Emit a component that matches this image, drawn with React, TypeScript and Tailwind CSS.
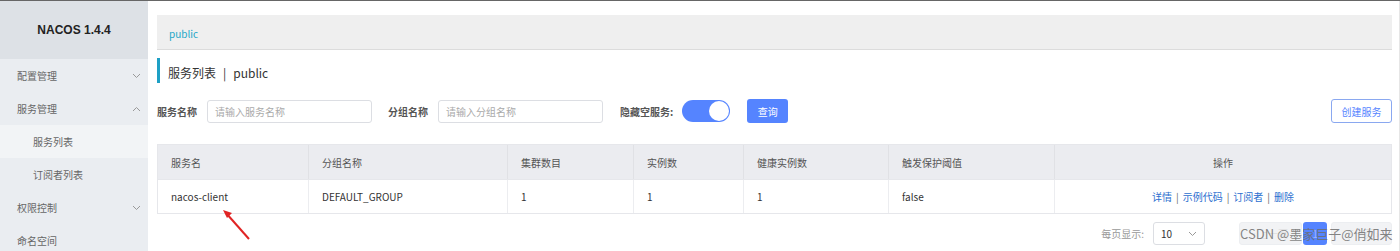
import React from "react";

const font = { fontFamily: '"Noto Sans CJK SC", "Liberation Sans", sans-serif' };
const arial = { fontFamily: '"Liberation Sans", Arial, sans-serif' };

function Chevron({ up = false }: { up?: boolean }) {
  return (
    <svg width="9" height="6" viewBox="0 0 9 6" className="text-[#999]">
      {up ? (
        <path d="M1 5 L4.5 1.5 L8 5" fill="none" stroke="currentColor" strokeWidth="1" />
      ) : (
        <path d="M1 1 L4.5 4.5 L8 1" fill="none" stroke="currentColor" strokeWidth="1" />
      )}
    </svg>
  );
}

const cols = [
  { w: "w-[151px]", h: "服务名", v: "nacos-client" },
  { w: "w-[199px]", h: "分组名称", v: "DEFAULT_GROUP" },
  { w: "w-[126px]", h: "集群数目", v: "1" },
  { w: "w-[110px]", h: "实例数", v: "1" },
  { w: "w-[145px]", h: "健康实例数", v: "1" },
  { w: "w-[166px]", h: "触发保护阈值", v: "false" },
];

export default function App() {
  return (
    <div style={font} className="w-[1400px] h-[251px] overflow-hidden bg-white border-t border-[#666] flex text-[10px] relative">
      {/* Sidebar */}
      <aside className="w-[148px] shrink-0 bg-[#eaedf1] flex flex-col">
        <div style={arial} className="h-[58px] shrink-0 bg-[#dde1e6] flex items-center justify-center text-[12px] font-bold text-[#222]">
          NACOS 1.4.4
        </div>
        <div className="h-[33px] shrink-0 flex items-center justify-between pl-[17px] pr-[7px] text-[#666]">
          <span>配置管理</span>
          <Chevron />
        </div>
        <div className="h-[33px] shrink-0 flex items-center justify-between pl-[17px] pr-[7px] text-[#666]">
          <span>服务管理</span>
          <Chevron up />
        </div>
        <div className="h-[33px] shrink-0 flex items-center pl-[33px] text-[#666] bg-[#f2f4f6]">服务列表</div>
        <div className="h-[33px] shrink-0 flex items-center pl-[33px] text-[#666]">订阅者列表</div>
        <div className="h-[33px] shrink-0 flex items-center justify-between pl-[17px] pr-[7px] text-[#666]">
          <span>权限控制</span>
          <Chevron />
        </div>
        <div className="h-[33px] shrink-0 flex items-center pl-[17px] text-[#666]">命名空间</div>
      </aside>

      {/* Main */}
      <main className="flex-1 pl-[9px] pr-[7px] pt-[14px] border-r border-[#e6e6e6] flex flex-col">
        <div className="h-[35px] shrink-0 bg-[#efefef] border-b border-[#dcdcdc] flex items-center pl-[12px] pt-[2px] text-[#1ea7c8]">
          public
        </div>

        <div className="mt-[8px] h-[25px] shrink-0 border-l-[3px] border-[#1ea0c5] flex items-center pl-[8px] pt-[4px] text-[12px] text-[#333]">
          服务列表<span className="mx-[7px]">|</span>public
        </div>

        <div className="mt-[16px] h-[24px] shrink-0 flex items-center">
          <span className="font-bold text-[#555] w-[50px]">服务名称</span>
          <div className="w-[165px] h-[23px] border border-[#dcdee3] rounded-[3px] flex items-center pl-[7px] text-[#aaa]">
            请输入服务名称
          </div>
          <span className="font-bold text-[#555] ml-[16px] w-[50px]">分组名称</span>
          <div className="w-[165px] h-[23px] border border-[#dcdee3] rounded-[3px] flex items-center pl-[7px] text-[#aaa]">
            请输入分组名称
          </div>
          <span className="font-bold text-[#555] ml-[17px]">隐藏空服务:</span>
          <div className="ml-[9px] w-[48px] h-[22px] rounded-full bg-[#5584ff] flex items-center justify-end pr-[1px]">
            <div className="w-[20px] h-[20px] rounded-full bg-white" />
          </div>
          <div className="ml-[17px] w-[41px] h-[24px] rounded-[3px] bg-[#5584ff] text-white flex items-center justify-center">
            查询
          </div>
          <div className="flex-1" />
          <div className="w-[61px] h-[24px] rounded-[3px] border border-[#8aa8f0] text-[#5584ff] flex items-center justify-center">
            创建服务
          </div>
        </div>

        {/* Table */}
        <div className="mt-[21px] shrink-0 border border-[#e6e7eb]">
          <div className="flex h-[34px] bg-[#ebecf0] text-[#555]">
            {cols.map((c) => (
              <div key={c.h} className={`${c.w} shrink-0 border-r border-[#e0e1e5] flex items-center pl-[13px]`}>
                {c.h}
              </div>
            ))}
            <div className="flex-1 flex items-center justify-center">操作</div>
          </div>
          <div className="flex h-[34px] bg-white text-[#333] border-t border-[#e6e7eb]">
            {cols.map((c) => (
              <div key={c.h} className={`${c.w} shrink-0 border-r border-[#ecedf0] flex items-center pl-[13px]`}>
                {c.v}
              </div>
            ))}
            <div className="flex-1 flex items-center justify-center text-[#2c6fcf]">
              <span>详情</span>
              <span className="mx-[4px] text-[#666]">|</span>
              <span>示例代码</span>
              <span className="mx-[4px] text-[#666]">|</span>
              <span>订阅者</span>
              <span className="mx-[4px] text-[#666]">|</span>
              <span>删除</span>
            </div>
          </div>
        </div>

        {/* Pagination */}
        <div className="mt-[8px] h-[23px] shrink-0 flex items-center justify-end">
          <span className="text-[#999]">每页显示:</span>
          <div className="ml-[9px] w-[52px] h-[23px] border border-[#dcdee3] rounded-[3px] flex items-center justify-between pl-[7px] pr-[7px] text-[#333]">
            <span>10</span>
            <Chevron />
          </div>
          <div className="ml-[34px] w-[63px] h-[23px] rounded-[3px] bg-[#f2f3f5] border border-[#eceef1] flex items-center justify-center text-[#e0e0e0]">
            ‹ 上一页
          </div>
          <div className="ml-[1px] w-[24px] h-[23px] rounded-[3px] bg-[#5584ff] text-[#9db5ff] flex items-center justify-center">
            1
          </div>
          <div className="ml-[4px] w-[61px] h-[23px] rounded-[3px] bg-[#f2f3f5] border border-[#eceef1] flex items-center justify-center text-[#e0e0e0]">
            下一页 ›
          </div>
        </div>
      </main>

      {/* watermark */}
      <div className="absolute z-10 left-[1240px] top-[224px] text-[13px] leading-[18px] text-[#6f6f6f]/85 whitespace-nowrap">
        CSDN @墨家巨子@俏如来
      </div>

      {/* red arrow annotation */}
      <svg className="absolute left-[215px] top-[202px]" width="45" height="45" viewBox="0 0 45 45">
        <line x1="34" y1="36" x2="11" y2="10" stroke="#e02424" strokeWidth="2" />
        <path d="M8 7 L17 10 L12 15 Z" fill="#e02424" />
      </svg>
    </div>
  );
}
